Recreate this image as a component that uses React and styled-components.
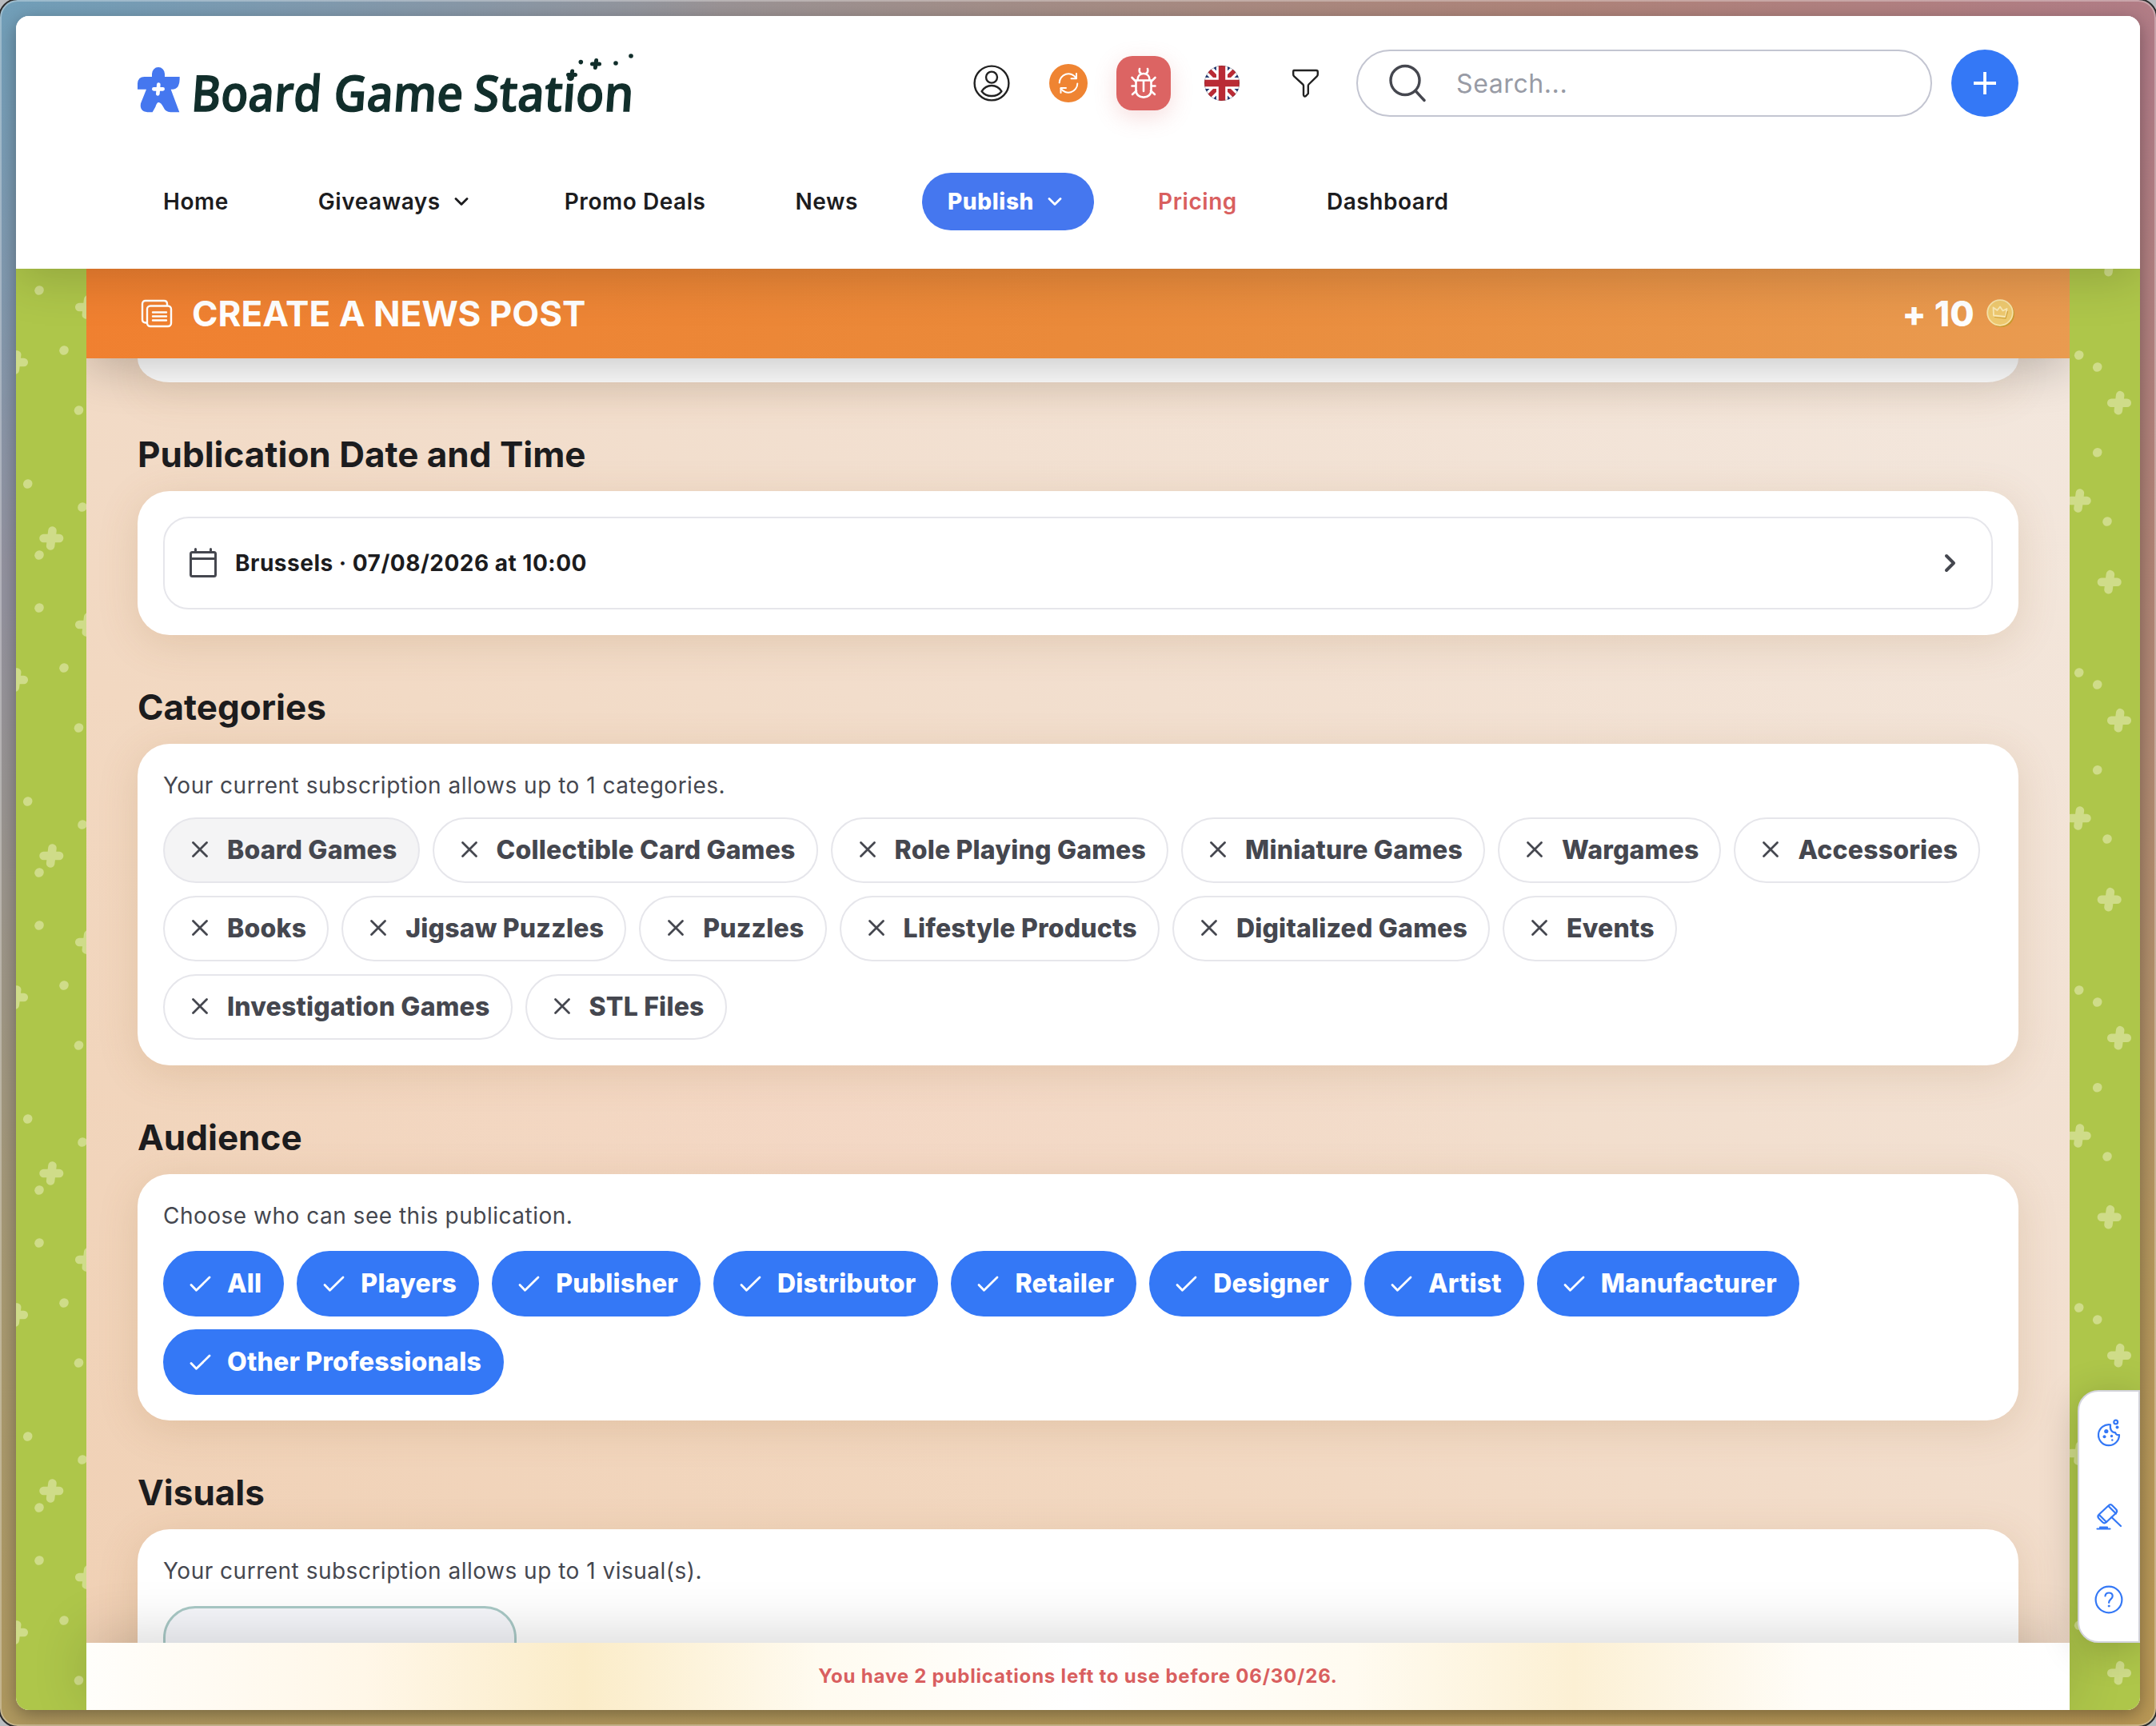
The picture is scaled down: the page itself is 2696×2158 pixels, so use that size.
import React from 'react';
import styled, { createGlobalStyle, css } from 'styled-components';

const GlobalStyle = createGlobalStyle`
    * {
        box-sizing: border-box;
    }
    body {
        margin: 0;
        font-family: Inter, "Liberation Sans", sans-serif;
        color: #1c1c1e;
        background: #b9bcc0;
    }
    button {
        font: inherit;
        border: none;
        margin: 0;
        cursor: pointer;
    }
`;

const Desktop = styled.div`
    width: 2696px;
    height: 2158px;
    padding: 20px;
    border-radius: 22px;
    box-shadow: inset 0 0 0 2px rgba(255, 255, 255, 0.3);
    outline: 2px solid #2b2b2b;
    background:
        radial-gradient(ellipse 900px 700px at 0 0, #719fb9 0%, rgba(113, 159, 185, 0) 100%),
        radial-gradient(ellipse 1900px 1500px at 100% 80px, #b27c88 0%, rgba(178, 128, 120, 0.8) 40%, rgba(178, 130, 110, 0) 100%),
        linear-gradient(to right, rgba(190, 150, 78, 0) 0%, rgba(190, 150, 78, 0.6) 100%),
        linear-gradient(to bottom, #8f94aa 0%, #94939f 35%, #a89a72 75%, #b0995f 100%);
`;

const Window = styled.div`
    position: relative;
    height: 100%;
    display: flex;
    flex-direction: column;
    border-radius: 16px;
    overflow: hidden;
    background: #fff;
`;

const WindowShadow = styled.div`
    height: 100%;
    border-radius: 16px;
    box-shadow: 0 6px 22px rgba(0, 0, 0, 0.34);
`;

const Header = styled.header`
    position: relative;
    z-index: 3;
    flex: none;
    height: 316px;
    padding: 42px 152px 0;
    background: #fff;
    box-shadow: 0 12px 56px rgba(0, 0, 0, 0.17);
`;

const TopRow = styled.div`
    display: flex;
    align-items: center;
    height: 84px;
`;

const Logo = styled.svg`
    flex: none;
    width: 640px;
    height: 120px;
    overflow: visible;
    font-family: "Open Sans", "Noto Sans", sans-serif;
    font-size: 62px;
    font-weight: 600;
`;

const Tools = styled.div`
    display: flex;
    align-items: center;
    margin-left: auto;
`;

const ToolButton = styled.button`
    display: flex;
    align-items: center;
    justify-content: center;
    flex: none;
    width: ${(p) => p.$size}px;
    height: ${(p) => p.$size}px;
    margin-right: ${(p) => p.$gap || 0}px;
    padding: 0;
    border-radius: ${(p) => p.$radius || '50%'};
    background: ${(p) => p.$bg || 'transparent'};
    box-shadow: ${(p) => (p.$glow ? '0 8px 28px rgba(220, 100, 99, 0.22)' : 'none')};
`;

const SearchBox = styled.div`
    display: flex;
    align-items: center;
    width: 720px;
    height: 84px;
    margin-right: 24px;
    padding-left: 38px;
    border: 2px solid #c3c5d1;
    border-radius: 42px;
    font-size: 32px;
    letter-spacing: 0.6px;
    color: #989ba5;

    span {
        margin-left: 35px;
    }
`;

const Nav = styled.nav`
    display: flex;
    gap: 48px;
    margin-top: 70px;
`;

const NavItem = styled.a`
    display: flex;
    align-items: center;
    height: 72px;
    padding: 0 32px;
    border-radius: 36px;
    font-size: 28px;
    font-weight: 600;
    letter-spacing: 0.54px;
    white-space: nowrap;
    color: ${(p) => (p.$accent ? '#d95f5f' : '#1c1c1e')};

    svg {
        margin-left: 10px;
        margin-right: 1px;
    }

    ${(p) =>
        p.$active &&
        css`
            font-weight: 800;
            letter-spacing: 0.65px;
            color: #fff;
            background: #4577ef;
        `}
`;

const Main = styled.main`
    flex: 1;
    min-height: 0;
    display: grid;
    grid-template-columns: 88px 2480px 88px;
`;

const Strip = styled.div`
    overflow: hidden;
    background: #aec64a;

    svg {
        display: block;
    }
`;

const Page = styled.div`
    position: relative;
    display: flex;
    flex-direction: column;
    min-height: 0;
    background:
        radial-gradient(ellipse 900px 400px at 38% 60%, rgba(246, 214, 200, 0.4), rgba(246, 214, 200, 0)),
        linear-gradient(to bottom left, #f3e8df 0%, #f2dfcf 38%, #f2d8c1 64%, #f0d0b4 100%);
`;

const TitleBar = styled.div`
    position: relative;
    z-index: 2;
    flex: none;
    display: flex;
    align-items: center;
    height: 112px;
    padding: 0 64px;
    color: #fff;
    background: linear-gradient(100deg, #f08030 0%, #ea8a3a 50%, #e99b50 100%);
    box-shadow: 0 10px 60px rgba(0, 0, 0, 0.24);
    clip-path: inset(0 0 -120px 0);

    h1 {
        margin: 0 0 0 20px;
        font-size: 44px;
        font-weight: 700;
    }
`;

const Reward = styled.div`
    display: flex;
    align-items: center;
    gap: 11px;
    margin-left: auto;
    font-size: 44px;
    font-weight: 800;
    letter-spacing: 0.2px;
`;

const Scroll = styled.div`
    flex: 1;
    min-height: 0;
    overflow: hidden;
    padding: 0 64px;
`;

const Card = styled.section`
    padding: 32px;
    border-radius: 40px;
    background: #fff;
    box-shadow: 0 10px 50px rgba(150, 100, 50, 0.17);
`;

const CardTail = styled(Card)`
    height: 30px;
    padding: 0;
    border-radius: 0 0 40px 40px / 0 0 30px 30px;
`;

const SectionTitle = styled.h2`
    margin: 62px 0 18px;
    font-size: 44px;
    font-weight: 650;
    line-height: 56px;
`;

const Hint = styled.p`
    margin: 0 0 ${(p) => p.$gap || 24}px;
    font-size: 28px;
    line-height: 40px;
    letter-spacing: 0.5px;
    color: #45474f;
`;

const DateRow = styled.button`
    display: flex;
    align-items: center;
    width: 100%;
    height: 116px;
    padding: 0 37px 0 28px;
    border: 2px solid #e6e6eb;
    border-radius: 32px;
    background: #fff;
    font-size: 28px;
    font-weight: 650;
    letter-spacing: 0.5px;
    color: #1c1c1e;

    span {
        flex: 1;
        margin-left: 20px;
        text-align: left;
    }
`;

const Chips = styled.div`
    display: flex;
    flex-wrap: wrap;
    gap: 16px;
`;

const Chip = styled.button`
    display: flex;
    align-items: center;
    height: 82px;
    padding: 0 26px 2px;
    border: 2px solid ${(p) => (p.$selected ? '#3478f6' : '#e6e6eb')};
    border-radius: 41px;
    background: ${(p) => (p.$selected ? '#3478f6' : p.$hovered ? '#f4f4f5' : '#fff')};
    color: ${(p) => (p.$selected ? '#fff' : '#45474f')};
    font-size: 32px;
    font-weight: 800;
    letter-spacing: 0.2px;
    white-space: nowrap;

    svg {
        margin-right: 16px;
    }
`;

const UploadBox = styled.div`
    width: 442px;
    height: 300px;
    border: 3px solid #a9c9c6;
    border-radius: 40px;
    background: #f6f7fb;
`;

const Footer = styled.footer`
    position: relative;
    z-index: 2;
    flex: none;
    display: flex;
    align-items: center;
    justify-content: center;
    height: 84px;
    padding-bottom: 2px;
    font-size: 24px;
    font-weight: 700;
    letter-spacing: 0.8px;
    color: #d95f5f;
    background: linear-gradient(to right, #fffefb 0%, #fff7e8 14%, #fbecc8 25%, #fffbf0 37%, #fff 50%, #fffbf0 64%, #fcf0d4 75%, #fffdf8 87%, #fff 100%);
    box-shadow: 0 -10px 70px rgba(0, 0, 0, 0.16);
`;

const SideDock = styled.aside`
    position: absolute;
    z-index: 4;
    right: 0;
    top: 1718px;
    display: flex;
    flex-direction: column;
    align-items: center;
    justify-content: space-between;
    width: 78px;
    height: 316px;
    padding: 32px 0;
    border: 2px solid #d3d4dc;
    border-radius: 26px 0 0 26px;
    background: #fff;
    box-shadow: 0 8px 50px rgba(0, 0, 0, 0.2);
`;

const DOTS = [[29, 27], [60, 102], [78.5, 177], [14.7, 269], [83, 298], [29, 358]];
const PLUSES = [[89, 48], [0, 117], [44.3, 337]];
const RIGHT_DOTS = [[11.7, 108], [34.7, 123], [34.7, 229.7], [47, 316]];
const RIGHT_PLUSES = [[62, 167.7], [11.7, 290], [49.7, 391.7], [49.7, -5.3]];

const Pattern = ({ id, dots, pluses }) => (
    <svg width="88" height="1802">
        <defs>
            <pattern id={id} width="88" height="397" patternUnits="userSpaceOnUse">
                {dots.map(([x, y]) => (
                    <ellipse key={`${x}-${y}`} cx={x} cy={y} rx="6" ry="5.6" fill="#cfdc89" transform={`rotate(-45 ${x} ${y})`} />
                ))}
                {pluses.map(([x, y]) => (
                    <path
                        key={`${x}-${y}`}
                        d={`M${x - 9.8} ${y}h19.6M${x + 1.2} ${y - 9.6}l-2.4 19.2`}
                        stroke="#cfdc89"
                        strokeWidth="10.5"
                        strokeLinecap="round"
                    />
                ))}
            </pattern>
        </defs>
        <rect width="88" height="1802" fill={`url(#${id})`} />
    </svg>
);

const sparkle = (x, y, r, w) => (
    <path d={`M${x - r} ${y}h${r * 2}M${x + 0.6} ${y - r}l-1.2 ${r * 2}`} strokeWidth={w} />
);

const BrandLogo = () => (
    <Logo viewBox="172 44 640 120">
        <g transform="translate(160 60) scale(0.3333)">
            <path
                fill="#4577ef"
                d="M90 108V97a24 25 0 0 1 48 0v11h56q1 22-6 36-7 11-22 11h-5l32 86h-33q-20-2-27-19-9-18-18-18-7 0-12 17l-11 20H73q-30-3-25-33l21-53H36v-22q2-25 26-25z"
            />
            <path d="M97 154h34M115 137l-3 35" stroke="#fff" strokeWidth="14" strokeLinecap="round" />
        </g>
        <g fill="#112e2b" stroke="#112e2b" strokeWidth="1.3" transform="translate(0 140) skewX(-4) translate(0 -140)">
            <text x="238" y="139.5" textLength="163" lengthAdjust="spacingAndGlyphs">Board</text>
            <text x="416" y="139.5" textLength="162" lengthAdjust="spacingAndGlyphs">Game</text>
            <text x="591" y="139.5" textLength="200" lengthAdjust="spacingAndGlyphs">Station</text>
        </g>
        <g stroke="#112e2b" strokeLinecap="round" fill="#112e2b">
            {sparkle(715, 93.5, 4.5, 5)}
            {sparkle(745, 80, 4.5, 5)}
        </g>
        <g fill="#112e2b">
            <circle cx="726.3" cy="77.6" r="2.8" />
            <circle cx="770" cy="79" r="2.8" />
            <circle cx="789" cy="70" r="2.8" />
        </g>
    </Logo>
);

const Icon = ({ size = 48, w = 2.6, color = 'currentColor', children, ...rest }) => (
    <svg
        width={size}
        height={size}
        viewBox={`0 0 ${size} ${size}`}
        fill="none"
        stroke={color}
        strokeWidth={w}
        strokeLinecap="round"
        strokeLinejoin="round"
        {...rest}
    >
        {children}
    </svg>
);

const UserIcon = () => (
    <Icon size={48} color="#222" w={2.4}>
        <circle cx="24" cy="24" r="21.4" />
        <circle cx="24" cy="16.6" r="7" />
        <path d="M11.6 34.2C14.5 29.5 19 27 24 27s9.5 2.5 12.4 7.2C33.5 38 29 40 24 40s-9.5-2-12.4-5.8z" />
    </Icon>
);

const SyncIcon = () => (
    <Icon size={32} color="#fff" w={2}>
        <path d="M4.7 15.5A11.3 11.3 0 0 1 25.5 9.5M27.3 16.5A11.3 11.3 0 0 1 6.5 22.5" />
        <path d="M26 4v6.2h-6.5M6.5 28v-6h6.5" />
    </Icon>
);

const BugIcon = () => (
    <Icon size={48} color="#fff" w={2.6}>
        <path d="M14.5 20.5h19V33c0 5-4 8.6-9.5 8.6S14.5 38 14.5 33zM24 20.5V34" />
        <path d="M16.5 20c0-5 3-8 7.5-8s7.5 3 7.5 8" />
        <path d="M21 12c-2-1-2.8-3-2-6M27 12c2-1 2.8-3 2-6" />
        <path d="M14.5 22l-5-5M33.5 22l5-5M14 27.5H9.5M34 27.5h4.5M15 33.5l-5 4.5M33 33.5l5 4.5" />
    </Icon>
);

const FlagIcon = () => (
    <svg width="44" height="44" viewBox="0 0 44 44">
        <clipPath id="flag">
            <circle cx="22" cy="22" r="22" />
        </clipPath>
        <g clipPath="url(#flag)">
            <rect width="44" height="44" fill="#253a73" />
            <path d="M0 0l44 44M44 0L0 44" stroke="#fff" strokeWidth="12" />
            <path d="M0 0l44 44M44 0L0 44" stroke="#b92b35" strokeWidth="5.5" />
            <path d="M22 0v44M0 22h44" stroke="#fff" strokeWidth="14" />
            <path d="M22 0v44M0 22h44" stroke="#b92b35" strokeWidth="8.4" />
        </g>
        <circle cx="22" cy="22" r="21.5" fill="none" stroke="#000" strokeOpacity="0.15" />
    </svg>
);

const FilterIcon = () => (
    <Icon size={48} color="#222" w={2.4}>
        <path d="M10 8h28c1.2 0 1.8.8 1.8 2v3c0 1-.3 1.7-1 2.4L28.500 25.500c-.5.5-.7 1-.7 1.8v9.700l-2.800 3c-1.200 1-3 .5-3-1.500V27.300c0-.8-.2-1.300-.8-1.800L10.200 15.400c-.7-.7-1-1.400-1-2.400v-3c0-1.200.3-2 .8-2z" />
    </Icon>
);

const SearchIcon = () => (
    <Icon size={50} color="#45474f" w={3.4}>
        <circle cx="21" cy="21.5" r="18" />
        <path d="M34 34.5L45 46.5" />
    </Icon>
);

const ChevronDown = () => (
    <Icon size={32} w={2.8}>
        <path d="M9 12.5l7 7 7-7" />
    </Icon>
);

const PostsIcon = () => (
    <Icon size={48} w={2.4}>
        <path d="M11 35.5H10c-2.5 0-4-1.5-4-4V12c0-2.5 1.5-4 4-4h23c2.5 0 4 1.5 4 4v1.5" />
        <rect x="12" y="14.5" width="30" height="25.5" rx="4" />
        <path d="M19 22.5h17M19 27.5h17M19 32.5h17" />
    </Icon>
);

const CoinIcon = () => (
    <svg width="44" height="44" viewBox="0 0 44 44">
        <circle cx="22.5" cy="22.5" r="16.5" fill="#c99a2e" />
        <circle cx="21" cy="21" r="15.8" fill="#eec96f" stroke="#f7e3a9" strokeWidth="1.8" />
        <path
            d="M13 24.5l-.5-10 5 3.500 3.500-4.500 3.500 5 5-2.500-1.500 10z"
            fill="none"
            stroke="#f9e8b5"
            strokeWidth="1.8"
            strokeLinejoin="round"
        />
        <path d="M14 26.5l14 1.5 2.5-9" fill="none" stroke="#d1a43c" strokeWidth="1.2" />
    </svg>
);

const CalendarIcon = () => (
    <Icon size={40} color="#45474f" w={3}>
        <rect x="4.5" y="6.5" width="31" height="30" rx="2" />
        <path d="M4.5 14.5h31M10.5 6.5V2.5M29.5 6.5V2.5" />
    </Icon>
);

const CrossIcon = () => (
    <Icon size={36} w={2.8}>
        <path d="M9.5 9.5l17 17M26.5 9.5l-17 17" />
    </Icon>
);

const CheckIcon = () => (
    <Icon size={36} w={2.8}>
        <path d="M7 20.5l6.5 6.8L30 11" />
    </Icon>
);

const CookieIcon = () => (
    <Icon size={40} color="#3478f6" w={2.2}>
        <path d="M22 9.3A13 13 0 1 0 33 22c-2.5.5-4.5-.6-4.9-3-4.2 0-7-3.2-6.1-9.7z" />
        <circle cx="28.7" cy="6" r="2.4" />
        <g fill="#3478f6" stroke="none">
            <circle cx="30.5" cy="12.5" r="2" />
            <circle cx="16.8" cy="17.5" r="2.6" />
            <circle cx="14.5" cy="24.3" r="2" />
            <circle cx="23.5" cy="23.5" r="1.7" />
            <circle cx="24.3" cy="28.5" r="1.2" />
        </g>
    </Icon>
);

const GavelIcon = () => (
    <Icon size={40} color="#3478f6" w={2.2}>
        <path d="M19.5 6.5c1.8-1.8 3.5-1.8 5 0l4.5 4.5c1.5 1.6 1.5 3.2 0 4.7L16.5 27.500c-1.500 1.200-3 1-4.500-.5l-4.500-4.500c-1.500-1.700-1.500-3.200 0-4.700z" />
        <path d="M20 7.5l9 9M8.5 18.5l8.5 8.5M23.5 21L35 32" />
        <path d="M5.5 35.5h16M9 33.7h9" />
    </Icon>
);

const HelpIcon = () => (
    <Icon size={40} color="#3478f6" w={2.2}>
        <circle cx="20" cy="20" r="16.4" />
        <path d="M15.5 15.5c.3-2.7 2-4 4.6-4 2.8 0 4.6 1.7 4.6 4.1 0 3.9-4.6 3.8-4.6 8.2" />
        <circle cx="20.1" cy="28" r="1" fill="#3478f6" strokeWidth="1" />
    </Icon>
);

const CATEGORIES = [
    'Board Games',
    'Collectible Card Games',
    'Role Playing Games',
    'Miniature Games',
    'Wargames',
    'Accessories',
    'Books',
    'Jigsaw Puzzles',
    'Puzzles',
    'Lifestyle Products',
    'Digitalized Games',
    'Events',
    'Investigation Games',
    'STL Files',
];

const AUDIENCES = [
    'All',
    'Players',
    'Publisher',
    'Distributor',
    'Retailer',
    'Designer',
    'Artist',
    'Manufacturer',
    'Other Professionals',
];

const NAV = [
    { label: 'Home' },
    { label: 'Giveaways', menu: true },
    { label: 'Promo Deals' },
    { label: 'News' },
    { label: 'Publish', menu: true, active: true },
    { label: 'Pricing', accent: true },
    { label: 'Dashboard' },
];

export default function App() {
    return (
        <Desktop>
            <GlobalStyle />
            <WindowShadow>
                <Window>
                    <Header>
                        <TopRow>
                            <BrandLogo />
                            <Tools>
                                <ToolButton $size={48} $gap={48}><UserIcon /></ToolButton>
                                <ToolButton $size={48} $gap={36} $bg="#ef8432"><SyncIcon /></ToolButton>
                                <ToolButton $size={68} $gap={42} $radius="20px" $bg="#dc6463" $glow><BugIcon /></ToolButton>
                                <ToolButton $size={44} $gap={58}><FlagIcon /></ToolButton>
                                <ToolButton $size={48} $gap={40}><FilterIcon /></ToolButton>
                                <SearchBox>
                                    <SearchIcon />
                                    <span>Search...</span>
                                </SearchBox>
                                <ToolButton $size={84} $bg="#3478f6">
                                    <Icon size={32} color="#fff" w={3.8} strokeLinecap="butt">
                                        <path d="M16 2v28M2 16h28" />
                                    </Icon>
                                </ToolButton>
                            </Tools>
                        </TopRow>
                        <Nav>
                            {NAV.map((item) => (
                                <NavItem key={item.label} $active={item.active} $accent={item.accent}>
                                    {item.label}
                                    {item.menu && <ChevronDown />}
                                </NavItem>
                            ))}
                        </Nav>
                    </Header>
                    <Main>
                        <Strip><Pattern id="left" dots={DOTS} pluses={PLUSES} /></Strip>
                        <Page>
                            <TitleBar>
                                <PostsIcon />
                                <h1>CREATE A NEWS POST</h1>
                                <Reward>
                                    + 10
                                    <CoinIcon />
                                </Reward>
                            </TitleBar>
                            <Scroll>
                                <CardTail />
                                <SectionTitle>Publication Date and Time</SectionTitle>
                                <Card>
                                    <DateRow>
                                        <CalendarIcon />
                                        <span>Brussels · 07/08/2026 at 10:00</span>
                                        <Icon size={28} color="#45474f" w={4}>
                                            <path d="M9 5l9 9-9 9" />
                                        </Icon>
                                    </DateRow>
                                </Card>
                                <SectionTitle>Categories</SectionTitle>
                                <Card>
                                    <Hint $gap={20}>Your current subscription allows up to 1 categories.</Hint>
                                    <Chips>
                                        {CATEGORIES.map((name, index) => (
                                            <Chip key={name} $hovered={index === 0}>
                                                <CrossIcon />
                                                {name}
                                            </Chip>
                                        ))}
                                    </Chips>
                                </Card>
                                <SectionTitle>Audience</SectionTitle>
                                <Card>
                                    <Hint>Choose who can see this publication.</Hint>
                                    <Chips>
                                        {AUDIENCES.map((name) => (
                                            <Chip key={name} $selected>
                                                <CheckIcon />
                                                {name}
                                            </Chip>
                                        ))}
                                    </Chips>
                                </Card>
                                <SectionTitle>Visuals</SectionTitle>
                                <Card>
                                    <Hint>Your current subscription allows up to 1 visual(s).</Hint>
                                    <UploadBox />
                                </Card>
                            </Scroll>
                            <Footer>You have 2 publications left to use before 06/30/26.</Footer>
                        </Page>
                        <Strip><Pattern id="right" dots={RIGHT_DOTS} pluses={RIGHT_PLUSES} /></Strip>
                    </Main>
                    <SideDock>
                        <CookieIcon />
                        <GavelIcon />
                        <HelpIcon />
                    </SideDock>
                </Window>
            </WindowShadow>
        </Desktop>
    );
}
